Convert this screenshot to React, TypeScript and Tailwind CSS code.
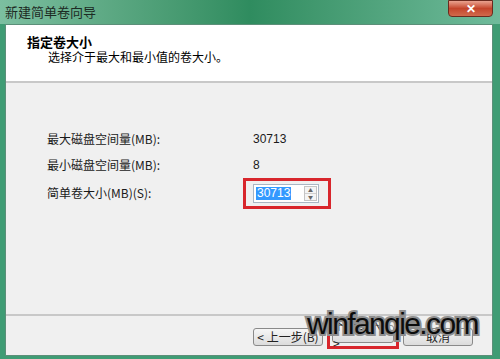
const CJK = "font-['SimSun','Noto_Sans_CJK_SC',sans-serif]";

function Row({ label, value }: { label: string; value: string }) {
  return (
    <div className="flex h-[26px] items-center text-[12px] text-[#1a1a1a]">
      <span className="w-[206px]">{label}</span>
      <span className="font-['Liberation_Sans',sans-serif]">{value}</span>
    </div>
  );
}

function Button({ children, className = "" }: { children: React.ReactNode; className?: string }) {
  return (
    <div
      className={`flex h-[18px] items-center justify-center rounded-[3px] border border-[#8a8a8a] bg-gradient-to-b from-[#f6f6f6] to-[#dcdcdc] text-[12px] text-[#222] ${className}`}
    >
      {children}
    </div>
  );
}

export default function App() {
  return (
    <div className={`relative flex h-[359px] w-[500px] flex-col overflow-hidden bg-[#3f9c74] ${CJK}`}>
      {/* title bar */}
      <div className="flex h-[24px] items-center justify-between bg-gradient-to-r from-[#7cbfa0] via-[#2f8c5f] to-[#6fbb9b] pl-[5px] pr-[7px]">
        <span className="text-[13px] text-[#1d2b24]">新建简单卷向导</span>
        <div className="mb-[8px] flex h-[17px] w-[45px] items-center justify-center rounded-b-[4px] border border-[#6b2a1e] bg-gradient-to-b from-[#e9a28f] via-[#c4452b] to-[#d06a4c] text-[12px] font-bold text-white">
          ✕
        </div>
      </div>

      {/* client area */}
      <div className="mb-[3px] ml-[5px] mr-[7px] flex flex-1 flex-col border border-[#5c8f79] bg-[#f0f0f0]">
        <div className="flex h-[58px] flex-col border-b-2 border-[#c8c8c8] bg-white pl-[21px] pt-[9px]">
          <span className="text-[13px] font-bold leading-[16px] text-black">指定卷大小</span>
          <span className="pl-[21px] text-[12px] leading-[14px] text-black">选择介于最大和最小值的卷大小。</span>
        </div>

        <div className="flex flex-1 flex-col pl-[41px] pt-[43px]">
          <Row label="最大磁盘空间量(MB):" value="30713" />
          <Row label="最小磁盘空间量(MB):" value="8" />
          <div className="flex h-[30px] items-center text-[12px] text-[#1a1a1a]">
            <span className="w-[196px]">简单卷大小(MB)(S):</span>
            <div className="flex h-[31px] w-[88px] items-center border-[3px] border-[#d8262c] pl-[7px]">
              <div className="flex h-[19px] w-[66px] items-center border border-[#a9b6c4] bg-white pl-[2px]">
                <span className="bg-[#3399ff] px-[1px] font-['Liberation_Sans',sans-serif] text-[12px] leading-[13px] text-white">30713</span>
                <div className="ml-auto mr-[1px] flex h-[15px] w-[13px] flex-col border border-[#c4c4c4] bg-[#f4f4f4] text-[5px] leading-[6px] text-[#666]">
                  <span className="flex-1 text-center">▲</span>
                  <span className="flex-1 border-t border-[#d0d0d0] text-center">▼</span>
                </div>
              </div>
            </div>
          </div>
        </div>

        <div className="flex h-[41px] items-start gap-[4px] border-t-2 border-[#c8c8c8] pl-[247px] pt-[12px]">
          <Button className="w-[70px]">
            <span>&lt; 上一步(B)</span>
          </Button>
          <div className="mt-[-3px] flex h-[24px] w-[72px] items-start border-x-[3px] border-b-[3px] border-[#d8262c] px-[2px]">
            <Button className="w-full">下一步(N) &gt;</Button>
          </div>
          <Button className="w-[70px]">取消</Button>
        </div>
      </div>

      {/* watermark */}
      <span className="absolute left-[307px] top-[305px] font-['Liberation_Sans',sans-serif] text-[30px] leading-[38px] tracking-[-1.6px] text-[#0c0c0c] [paint-order:stroke_fill] [-webkit-text-stroke:4px_#8e8e8e]">
        winfanqie.com
      </span>
    </div>
  );
}
